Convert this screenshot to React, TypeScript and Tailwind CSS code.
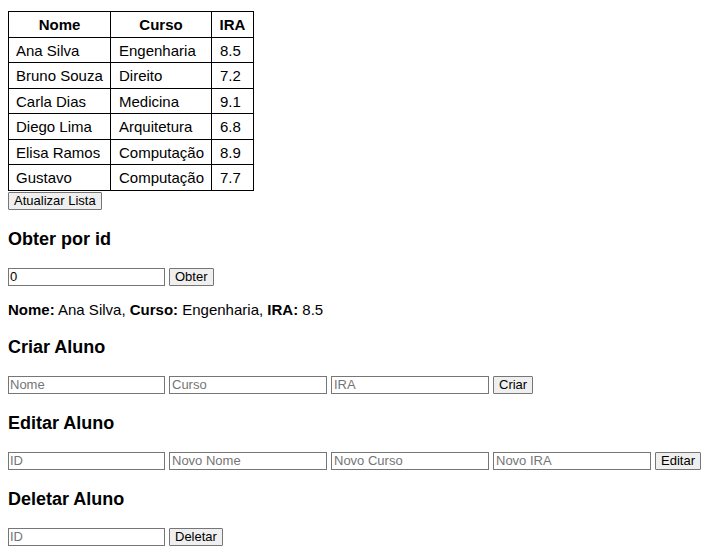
import { useState } from "react";
import type { ButtonHTMLAttributes, InputHTMLAttributes, ReactNode } from "react";

type Aluno = { nome: string; curso: string; ira: string };

const alunos: Aluno[] = [
  { nome: "Ana Silva", curso: "Engenharia", ira: "8.5" },
  { nome: "Bruno Souza", curso: "Direito", ira: "7.2" },
  { nome: "Carla Dias", curso: "Medicina", ira: "9.1" },
  { nome: "Diego Lima", curso: "Arquitetura", ira: "6.8" },
  { nome: "Elisa Ramos", curso: "Computação", ira: "8.9" },
  { nome: "Gustavo", curso: "Computação", ira: "7.7" },
];

function Campo(props: InputHTMLAttributes<HTMLInputElement>) {
  return (
    <input
      type="text"
      aria-label={props.placeholder}
      className="h-[18px] w-[158px] shrink-0 border border-[#767676] bg-white px-0.5 pb-0.5 text-[13px] leading-[14px] text-black placeholder:text-[#757575] first:w-[157px] first:px-px"
      {...props}
    />
  );
}

function Botao(props: ButtonHTMLAttributes<HTMLButtonElement>) {
  return (
    <button
      type="button"
      className="flex h-[18px] shrink-0 items-center rounded-[1px] border border-[#767676] bg-[#efefef] px-[5px] text-[13px] leading-4 whitespace-nowrap text-black"
      {...props}
    />
  );
}

function Secao({ titulo, children }: { titulo: string; children: ReactNode }) {
  return (
    <section>
      <h3 className="my-[19px] text-[18px] leading-5 font-bold">{titulo}</h3>
      <form className="flex gap-1" onSubmit={(e) => e.preventDefault()}>
        {children}
      </form>
    </section>
  );
}

export default function App() {
  const [id, setId] = useState("0");
  const aluno = alunos[0];

  return (
    <main className="bg-white pt-[11px] pb-1 pl-2 font-['Liberation_Sans',Arial,sans-serif] text-[15px] leading-[17px] text-black">
      <table className="mb-px border-collapse border border-black">
        <colgroup>
          <col className="w-[102px]" />
          <col className="w-[101px]" />
          <col className="w-[42px]" />
        </colgroup>
        <thead>
          <tr className="h-[26px]">
            <th className="border border-black">Nome</th>
            <th className="border border-black">Curso</th>
            <th className="border border-black">IRA</th>
          </tr>
        </thead>
        <tbody>
          {alunos.map((a) => (
            <tr key={a.nome} className="odd:h-[25px] even:h-[26px]">
              <td className="border border-black px-[7px]">{a.nome}</td>
              <td className="border border-black pr-1 pl-2">{a.curso}</td>
              <td className="border border-black pr-1 pl-2">{a.ira}</td>
            </tr>
          ))}
        </tbody>
      </table>
      <Botao>Atualizar Lista</Botao>

      <Secao titulo="Obter por id">
        <Campo aria-label="ID" value={id} onChange={(e) => setId(e.target.value)} />
        <Botao>Obter</Botao>
      </Secao>
      <p className="mt-[15px]">
        <strong>Nome:</strong> {aluno.nome}, <strong>Curso:</strong> {aluno.curso},{" "}
        <strong>IRA:</strong> {aluno.ira}
      </p>

      <Secao titulo="Criar Aluno">
        <Campo placeholder="Nome" />
        <Campo placeholder="Curso" />
        <Campo placeholder="IRA" />
        <Botao>Criar</Botao>
      </Secao>

      <Secao titulo="Editar Aluno">
        <Campo placeholder="ID" />
        <Campo placeholder="Novo Nome" />
        <Campo placeholder="Novo Curso" />
        <Campo placeholder="Novo IRA" />
        <Botao>Editar</Botao>
      </Secao>

      <Secao titulo="Deletar Aluno">
        <Campo placeholder="ID" />
        <Botao>Deletar</Botao>
      </Secao>
    </main>
  );
}
